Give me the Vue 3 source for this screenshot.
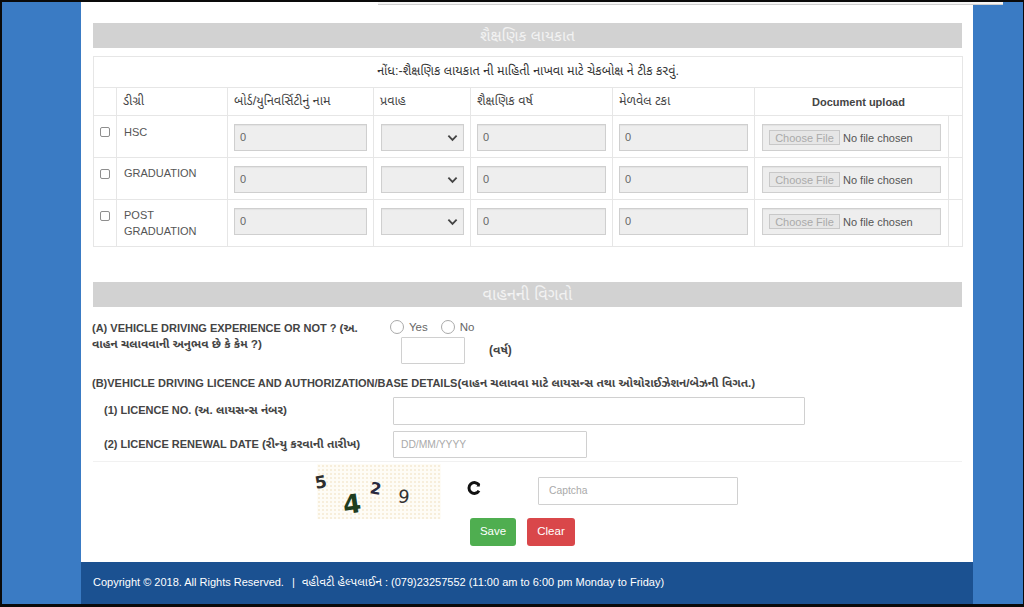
<script setup>
const rows = [
  { name: 'HSC', cls: 'r1' },
  { name: 'GRADUATION', cls: 'r2' },
  { name: 'POST GRADUATION', cls: 'r3' },
]
</script>

<template>
  <div class="frame">
    <div class="page">
      <div class="topfrag"></div>
      <div class="band band-a">શૈક્ષણિક લાયકાત</div>
      <table class="edu">
        <colgroup>
          <col class="c1" /><col class="c2" /><col class="c3" /><col class="c4" />
          <col class="c5" /><col class="c6" /><col class="c7" /><col class="c8" />
        </colgroup>
        <tbody>
          <tr class="note"><td colspan="8">નોંધ:-શૈક્ષણિક લાયકાત ની માહિતી નાખવા માટે ચેકબોક્ષ ને ટીક કરવું.</td></tr>
          <tr class="head">
            <td></td>
            <td>ડીગ્રી</td>
            <td>બોર્ડ/યુનિવર્સિટીનું નામ</td>
            <td>પ્રવાહ</td>
            <td>શૈક્ષણિક વર્ષ</td>
            <td>મેળવેલ ટકા</td>
            <td colspan="2" class="doc">Document upload</td>
          </tr>
          <tr v-for="r in rows" :key="r.name" :class="r.cls">
            <td class="ck"><span class="box"></span></td>
            <td class="deg">{{ r.name }}</td>
            <td><div class="dis">0</div></td>
            <td><div class="dis sel"><svg viewBox="0 0 12 8" class="chev"><path d="M1.500 1.500 6 6l4.500-4.500" /></svg></div></td>
            <td><div class="dis">0</div></td>
            <td><div class="dis">0</div></td>
            <td><div class="dis file"><span class="choose">Choose File</span><span class="nofile">No file chosen</span></div></td>
            <td></td>
          </tr>
        </tbody>
      </table>

      <div class="band band-b">વાહનની વિગતો</div>

      <div class="exp">
        <div class="exp-label"><b>(A) VEHICLE DRIVING EXPERIENCE OR NOT ? <span class="gu">(અ. વાહન ચલાવવાની અનુભવ છે કે કેમ ?)</span></b></div>
        <div class="exp-right">
          <div class="radios">
            <span class="radio"></span><span class="rl">Yes</span>
            <span class="radio r2nd"></span><span class="rl">No</span>
          </div>
          <div class="years"><span class="inp yr"></span><b class="varsh gu">(વર્ષ)</b></div>
        </div>
      </div>

      <div class="b-title">(B)VEHICLE DRIVING LICENCE AND AUTHORIZATION/BASE DETAILS<span class="gu">(વાહન ચલાવવા માટે લાયસન્સ તથા ઓથોરાઈઝેશન/બેઝની વિગત.)</span></div>

      <div class="line l1">
        <b class="ll">(1) LICENCE NO. <span class="gu">(અ. લાયસન્સ નંબર)</span></b>
        <span class="inp lic"></span>
      </div>
      <div class="line l2">
        <b class="ll">(2) LICENCE RENEWAL DATE <span class="gu">(રીન્યુ કરવાની તારીખ)</span></b>
        <span class="inp ren">DD/MM/YYYY</span>
      </div>

      <div class="cap">
        <div class="capimg">
          <span class="d d5">5</span><span class="d d4">4</span><span class="d d2">2</span><span class="d d9">9</span>
        </div>
        <svg class="refresh" viewBox="0 0 16 16"><path d="M13 5.200A5.400 5.400 0 1 0 13 10.800" /><path d="M13.800 3v3.500h-3.500z" class="fill" /></svg>
        <span class="inp capin">Captcha</span>
      </div>

      <div class="btns">
        <span class="btn save">Save</span>
        <span class="btn clear">Clear</span>
      </div>

      <div class="foot">
        <span>Copyright © 2018. All Rights Reserved.</span>
        <span class="sep">|</span>
        <span><span class="gu">વહીવટી હેલ્પલાઈન</span> : (079)23257552 (11:00 am to 6:00 pm Monday to Friday)</span>
      </div>
    </div>
  </div>
</template>

<style scoped>
.frame {
  box-sizing: border-box;
  width: 1024px;
  height: 607px;
  overflow: hidden;
  background: #3a7bc4;
  border-top: 2px solid #0a0a0a;
  border-bottom: 3px solid #0a0a0a;
  border-left: 2px solid #0a0a0a;
  border-right: 1px solid #0a0a0a;
  font-family: "Liberation Sans", "Noto Sans Gujarati", "Noto Sans", sans-serif;
  color: #333;
}
.gu { font-size: 1.07em; }
.page {
  position: relative;
  box-sizing: border-box;
  width: 892px;
  height: 602px;
  margin-left: 79px;
  padding: 21px 11px 0 12px;
  background: #fff;
  display: flex;
  flex-direction: column;
  align-items: stretch;
}
.topfrag {
  position: absolute;
  top: 0;
  left: 297px;
  width: 625px;
  height: 2px;
  background: #f5f5f5;
  border-bottom: 1px solid #cfcfcf;
}
.band {
  height: 25px;
  background: #d2d2d2;
  color: #f2f2f2;
  font-size: 15.500px;
  line-height: 25px;
  text-align: center;
  flex: none;
}
.edu {
  width: 869px;
  margin-top: 8px;
  table-layout: fixed;
  border-collapse: collapse;
  font-size: 12.600px;
  color: #444;
  flex: none;
}
.edu td {
  border: 1px solid #e6e6e6;
  padding: 0;
  vertical-align: top;
}
.c1 { width: 23px; }
.c2 { width: 111px; }
.c3 { width: 146px; }
.c4 { width: 97px; }
.c5 { width: 142px; }
.c6 { width: 142px; }
.c7 { width: 194px; }
.c8 { width: 14px; }
.note td {
  height: 30px;
  text-align: center;
  vertical-align: middle;
  color: #333;
}
.head td {
  height: 27px;
  padding-left: 6px;
  vertical-align: middle;
}
.head td.doc {
  padding-left: 0;
  text-align: center;
  font-weight: 700;
  color: #444;
  font-size: 11px;
}
.r1 td, .r2 td { height: 33px; }
.r3 td { height: 38px; }
.ck { text-align: center; }
.box {
  display: block;
  width: 10px;
  height: 10px;
  margin: 11px 0 0 6px;
  border: 1px solid #8e8e8e;
  border-radius: 2px;
  background: #fff;
  box-sizing: border-box;
}
.edu td.deg {
  padding: 8px 20px 0 7px;
  line-height: 16px;
  font-size: 11px;
  color: #555;
}
.edu .r2 td.deg { padding-top: 7px; height: 34px; }
.edu .r3 td.deg { padding-top: 7px; height: 39px; }
.dis {
  box-sizing: border-box;
  height: 27px;
  margin: 8px 6px 0 6px;
  border: 1px solid #cfcfcf;
  background: #eeeeee;
  padding-left: 5px;
  font-size: 11px;
  line-height: 24px;
  color: #666;
  box-shadow: inset 0 1px 1px rgba(0, 0, 0, 0.05);
}
.sel { position: relative; margin-left: 7px; }
.chev {
  position: absolute;
  right: 5px;
  top: 9px;
  width: 11px;
  height: 8px;
  fill: none;
  stroke: #444;
  stroke-width: 2;
}
.file {
  display: flex;
  align-items: center;
  padding-left: 6px;
  margin-left: 7px;
  margin-right: 7px;
}
.choose {
  box-sizing: border-box;
  width: 71px;
  height: 15px;
  line-height: 14px;
  border: 1px solid #c8c8c8;
  background: #e6e6e6;
  color: #aaa;
  font-size: 11px;
  text-align: center;
  white-space: nowrap;
  flex: none;
}
.nofile {
  margin-left: 3px;
  font-size: 11px;
  color: #555;
  white-space: nowrap;
}
.band-b { margin-top: 35px; font-size: 16.500px; }
.exp {
  display: flex;
  height: 56px;
  flex: none;
  margin-top: 13px;
}
.exp-label {
  box-sizing: border-box;
  width: 298px;
  margin-left: -1px;
  padding-right: 28px;
  font-size: 11px;
  line-height: 16px;
  color: #444;
}
.radios {
  display: flex;
  align-items: center;
  height: 14px;
  font-size: 11.500px;
  color: #666;
}
.radio {
  box-sizing: border-box;
  width: 14px;
  height: 14px;
  border-radius: 50%;
  border: 1px solid #aaa;
  background: #fff;
}
.rl { margin-left: 5px; }
.r2nd { margin-left: 13px; }
.years {
  display: flex;
  align-items: flex-end;
  margin: 3px 0 0 11px;
}
.inp {
  box-sizing: border-box;
  display: block;
  border: 1px solid #d0d0d0;
  background: #fff;
  border-radius: 1px;
  flex: none;
}
.yr { width: 64px; height: 27px; }
.varsh {
  margin: 0 0 5px 24px;
  font-size: 12px;
  line-height: 18px;
  color: #444;
}
.b-title {
  margin: 0 0 0 -1px;
  height: 14px;
  line-height: 14px;
  font-size: 11px;
  font-weight: 700;
  color: #444;
  white-space: nowrap;
  flex: none;
}
.line {
  display: flex;
  align-items: center;
  flex: none;
  padding-left: 11px;
}
.l1 { height: 28px; margin-top: 7px; }
.l2 { height: 27px; margin-top: 6px; }
.ll {
  width: 289px;
  font-size: 11px;
  color: #444;
  white-space: nowrap;
}
.lic { width: 412px; height: 28px; }
.ren {
  width: 194px;
  height: 27px;
  padding-left: 7px;
  line-height: 25px;
  font-size: 10.300px;
  color: #aaa;
}
.cap {
  position: relative;
  display: flex;
  align-items: flex-start;
  height: 54px;
  margin-top: 3px;
  padding-top: 2px;
  padding-left: 224px;
  border-top: 1px solid #f1f1f1;
  flex: none;
}
.capimg {
  position: relative;
  width: 124px;
  height: 55px;
  flex: none;
  background-color: #fefcf6;
  background-image: radial-gradient(circle, #f7eedb 1.100px, transparent 1.400px);
  background-size: 4px 4px;
}
.d {
  position: absolute;
  font-family: "DejaVu Sans", sans-serif;
  font-weight: 700;
  line-height: 1;
}
.d5 { left: -2px; top: 10px; font-size: 17px; color: #2e2e2e; transform: rotate(-10deg); }
.d4 { left: 26px; top: 27px; font-size: 26px; color: #1f3d1f; transform: rotate(-8deg); }
.d2 { left: 53px; top: 17px; font-size: 16px; color: #2a2a3e; transform: rotate(10deg); }
.d9 { left: 81px; top: 24px; font-size: 18px; color: #333; font-weight: 400; transform: rotate(6deg); }
.refresh {
  width: 16px;
  height: 16px;
  margin: 16px 0 0 25px;
  fill: none;
  stroke: #111;
  stroke-width: 3;
  flex: none;
}
.refresh .fill { fill: #111; stroke-width: 0; }
.capin {
  width: 200px;
  height: 28px;
  margin: 13px 0 0 56px;
  padding-left: 10px;
  line-height: 26px;
  font-size: 10.300px;
  color: #aaa;
}
.btns {
  position: relative;
  display: flex;
  gap: 11px;
  height: 28px;
  margin: 0 0 0 377px;
  flex: none;
}
.btn {
  box-sizing: border-box;
  height: 28px;
  line-height: 26px;
  text-align: center;
  font-size: 11.500px;
  color: #fff;
  border-radius: 3px;
}
.save { width: 46px; background: #4fae50; }
.clear { width: 48px; background: #d9474a; }
.foot {
  position: relative;
  margin: 16px -11px 0 -12px;
  height: 42px;
  padding-left: 12px;
  background: #1b5191;
  color: #fff;
  font-size: 11px;
  line-height: 40px;
  white-space: nowrap;
  flex: none;
}
.sep { margin: 0 7px 0 8px; }
</style>

<style>
html, body { margin: 0; background: #000; }
</style>
